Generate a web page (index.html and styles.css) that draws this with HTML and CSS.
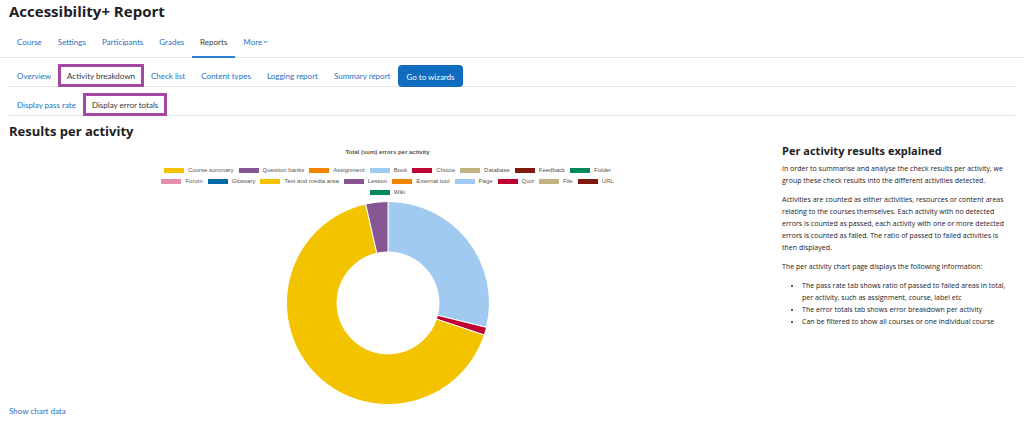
FILE: index.html
```html
<!DOCTYPE html>
<html lang="en">
<head>
<meta charset="utf-8">
<meta name="viewport" content="width=device-width, initial-scale=1">
<title>Accessibility+ Report</title>
<link rel="stylesheet" href="styles.css">
</head>
<body>
<header>
  <h1 class="page-title">Accessibility+ Report</h1>
  <nav class="course-nav" aria-label="Course">
    <a href="#">Course</a>
    <a href="#">Settings</a>
    <a href="#">Participants</a>
    <a href="#">Grades</a>
    <a href="#" class="current" aria-current="page">Reports</a>
    <button type="button" class="more">More<svg class="chevron" viewBox="0 0 5 4" aria-hidden="true"><path d="M.8 1 2.5 2.7 4.2 1"/></svg></button>
  </nav>
</header>
<main>
  <nav class="tabs" aria-label="Report">
    <a href="#">Overview</a>
    <a href="#" class="selected" aria-current="page">Activity breakdown</a>
    <a href="#">Check list</a>
    <a href="#">Content types</a>
    <a href="#">Logging report</a>
    <a href="#">Summary report</a>
    <button type="button" class="wizards">Go to wizards</button>
  </nav>
  <nav class="tabs" aria-label="Activity breakdown">
    <a href="#">Display pass rate</a>
    <a href="#" class="selected" aria-current="page">Display error totals</a>
  </nav>
  <h2 class="section-title">Results per activity</h2>
  <div class="results">
    <section class="chart">
      <h3 class="chart-title">Total (sum) errors per activity</h3>
      <div class="legend">
        <ul>
          <li class="yellow">Course summary</li>
          <li class="purple">Question banks</li>
          <li class="orange">Assignment</li>
          <li class="sky">Book</li>
          <li class="red">Choice</li>
          <li class="sand">Database</li>
          <li class="brown">Feedback</li>
          <li class="green">Folder</li>
        </ul>
        <ul>
          <li class="pink">Forum</li>
          <li class="blue">Glossary</li>
          <li class="yellow">Text and media area</li>
          <li class="purple">Lesson</li>
          <li class="orange">External tool</li>
          <li class="sky">Page</li>
          <li class="red">Quiz</li>
          <li class="sand">File</li>
          <li class="brown">URL</li>
        </ul>
        <ul>
          <li class="green">Wiki</li>
        </ul>
      </div>
      <svg class="donut" viewBox="0 0 204 204" role="img" aria-label="Errors per activity">
        <path class="sky" d="M102 .5A101.5 101.5 0 0 1 200.5 126.4L151.5 114.3A51 51 0 0 0 102 51Z"/>
        <path class="red" d="M200.5 126.4A101.5 101.5 0 0 1 198.3 134L150.4 118.1A51 51 0 0 0 151.5 114.3Z"/>
        <path class="yellow" d="M198.3 134A101.5 101.5 0 1 1 79.7 3L90.8 52.2A51 51 0 1 0 150.4 118.1Z"/>
        <path class="purple" d="M79.7 3A101.5 101.5 0 0 1 102 .5L102 51A51 51 0 0 0 90.8 52.2Z"/>
      </svg>
      <a href="#" class="chart-data">Show chart data</a>
    </section>
    <aside class="explained">
      <h3>Per activity results explained</h3>
      <p>In order to summarise and analyse the check results per activity, we group these check results into the different activities detected.</p>
      <p>Activities are counted as either activities, resources or content areas relating to the courses themselves. Each activity with no detected errors is counted as passed, each activity with one or more detected errors is counted as failed. The ratio of passed to failed activities is then displayed.</p>
      <p>The per activity chart page displays the following information:</p>
      <ul>
        <li>The pass rate tab shows ratio of passed to failed areas in total, per activity, such as assignment, course, label etc</li>
        <li>The error totals tab shows error breakdown per activity</li>
        <li>Can be filtered to show all courses or one individual course</li>
      </ul>
    </aside>
  </div>
</main>
</body>
</html>
```

FILE: styles.css
```css
* { box-sizing: border-box; }
body {
  margin: 0;
  background: #fff;
  color: #1d2125;
  font: 8px/12px Lato, "Open Sans", sans-serif;
}
h1, h2, h3, p, ul { margin: 0; padding: 0; }
a { color: #1f70c6; text-decoration: none; }
button { border: 0; font: inherit; cursor: pointer; }

.page-title {
  padding: 1px 9px 7px;
  font: 700 15px/20px "Open Sans", sans-serif;
}
.course-nav {
  display: flex;
  padding: 0 9px;
  border-bottom: 1px solid #e3e6ea;
}
.course-nav a, .more {
  margin-bottom: -1px;
  padding: 8px;
  border-bottom: 2px solid transparent;
}
.course-nav .current { border-bottom-color: #2f7fd0; color: #343a40; }
.more {
  display: flex;
  align-items: center;
  gap: 1px;
  background: none;
  color: #1f70c6;
}
.chevron { width: 5px; height: 4px; fill: none; stroke: currentColor; stroke-width: 1; }

main { padding: 7px 9px; }
.tabs {
  display: flex;
  margin-bottom: 7px;
  border-bottom: 1px solid #e3e6ea;
}
.tabs a, .wizards { padding: 5px 8px 4px; }
.tabs .selected {
  color: #343a40;
  outline: 3px solid #a349a4;
  outline-offset: -2px;
}
.wizards {
  margin-bottom: -1px;
  border-radius: 4px;
  background: #0f6cbf;
  color: #fff;
}
.section-title { font: 700 13px/16px "Open Sans", sans-serif; }

.results {
  display: grid;
  grid-template-columns: minmax(0, 13fr) minmax(0, 4fr);
  gap: 16px;
}
.chart {
  display: flex;
  flex-direction: column;
  align-items: center;
  padding-top: 8px;
}
.chart-title, .legend { color: #555; font: 6px/11px "Liberation Sans", Arial, sans-serif; }
.chart-title { font-weight: 700; }
.legend { padding-top: 7px; }
.legend ul {
  display: flex;
  flex-wrap: wrap;
  justify-content: center;
  gap: 5px;
  list-style: none;
}
.legend li { display: flex; align-items: center; gap: 4px; }
.legend li::before {
  content: "";
  width: 20px;
  height: 5px;
  background: var(--series);
}
.yellow { --series: #f3c300; }
.purple { --series: #875692; }
.orange { --series: #f38400; }
.sky { --series: #a1caf1; }
.red { --series: #be0032; }
.sand { --series: #c2b280; }
.brown { --series: #7f180d; }
.green { --series: #008856; }
.pink { --series: #e68fac; }
.blue { --series: #0067a5; }

.donut { display: block; width: 204px; height: 204px; margin-top: 3px; }
.donut path { fill: var(--series); stroke: #fff; stroke-width: 1; }
.chart-data { align-self: flex-start; }

.explained { padding: 4px 4px 0 0; font: 7px/12px "Open Sans", sans-serif; }
.explained h3 { margin-bottom: 4px; font: 700 11px/16px "Open Sans", sans-serif; }
.explained p { margin-bottom: 7px; }
.explained ul { padding-left: 20px; }
```
